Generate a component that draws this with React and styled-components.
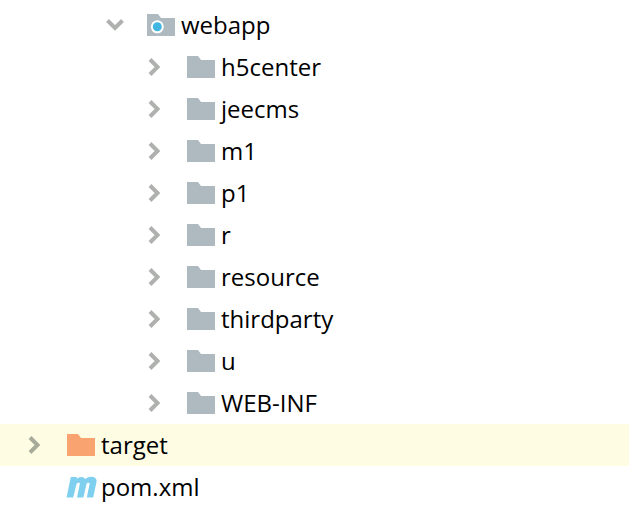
import React from 'react';
import styled, { createGlobalStyle } from 'styled-components';

const GlobalStyle = createGlobalStyle`
  html, body {
    margin: 0;
    padding: 0;
    background: #ffffff;
  }
`;

const Tree = styled.div`
  width: 629px;
  height: 513px;
  padding-top: 4px;
  box-sizing: border-box;
  overflow: hidden;
  font-family: "Open Sans", "Noto Sans", sans-serif;
  font-size: 24px;
  color: #000000;
`;

const Row = styled.div`
  display: flex;
  align-items: center;
  height: 42px;
  padding-left: ${(p) => p.$indent}px;
  background: ${(p) => (p.$active ? '#fefde4' : 'transparent')};
`;

const Toggle = styled.div`
  width: 40px;
  height: 42px;
  display: flex;
  align-items: center;
  flex-shrink: 0;
`;

const IconSlot = styled.div`
  width: 34px;
  display: flex;
  align-items: center;
  flex-shrink: 0;
`;

const Label = styled.span`
  line-height: 42px;
  white-space: nowrap;
`;

const Chevron = ({ open, color = '#afb1ae' }) =>
  open ? (
    <svg width="20" height="14" viewBox="0 0 20 14" style={{ marginLeft: '-2px' }}>
      <path d="M2.5 2.5 L10 10 L17.5 2.5" fill="none" stroke={color} strokeWidth="4" />
    </svg>
  ) : (
    <svg width="14" height="20" viewBox="0 0 14 20">
      <path d="M3 2.5 L10.5 10 L3 17.5" fill="none" stroke={color} strokeWidth="4" />
    </svg>
  );

const Folder = ({ color = '#afb9c0', dot }) => (
  <svg width="28" height="22" viewBox="0 0 28 22">
    <path d="M0 0 H11 L14 4 H28 V22 H0 Z" fill={color} />
    {dot && <circle cx="10.3" cy="12.8" r="6.5" fill="#ffffff" />}
    {dot && <circle cx="10.3" cy="12.8" r="4.5" fill="#40b6e0" />}
  </svg>
);

const MavenIcon = () => (
  <svg width="31" height="22" viewBox="0 0 31 22" style={{ marginLeft: '-1px' }}>
    <path
      d="M0.5 21.5 L4.8 1 H11 L10.7 3 C13 0.3 17.8 0 19.2 3.2 C21.5 0 30 -1 30.7 5 L27.2 21.5 H20.8 L23.6 8 C23.9 6.3 21.3 6.3 20.5 8 L17.4 21.5 H11 L13.8 8 C14.1 6.3 11.5 6.3 10.5 8 L7.2 21.5 Z"
      fill="#7fd0ef"
    />
  </svg>
);

const items = ['h5center', 'jeecms', 'm1', 'p1', 'r', 'resource', 'thirdparty', 'u', 'WEB-INF'];

const App = () => (
  <>
    <GlobalStyle />
    <Tree>
      <Row $indent={107}>
        <Toggle>
          <Chevron open />
        </Toggle>
        <IconSlot>
          <Folder dot />
        </IconSlot>
        <Label>webapp</Label>
      </Row>
      {items.map((name) => (
        <Row key={name} $indent={147}>
          <Toggle>
            <Chevron />
          </Toggle>
          <IconSlot>
            <Folder />
          </IconSlot>
          <Label>{name}</Label>
        </Row>
      ))}
      <Row $indent={27} $active>
        <Toggle>
          <Chevron color="#a9ab9a" />
        </Toggle>
        <IconSlot>
          <Folder color="#f9a470" />
        </IconSlot>
        <Label>target</Label>
      </Row>
      <Row $indent={67}>
        <IconSlot>
          <MavenIcon />
        </IconSlot>
        <Label>pom.xml</Label>
      </Row>
    </Tree>
  </>
);

export default App;
